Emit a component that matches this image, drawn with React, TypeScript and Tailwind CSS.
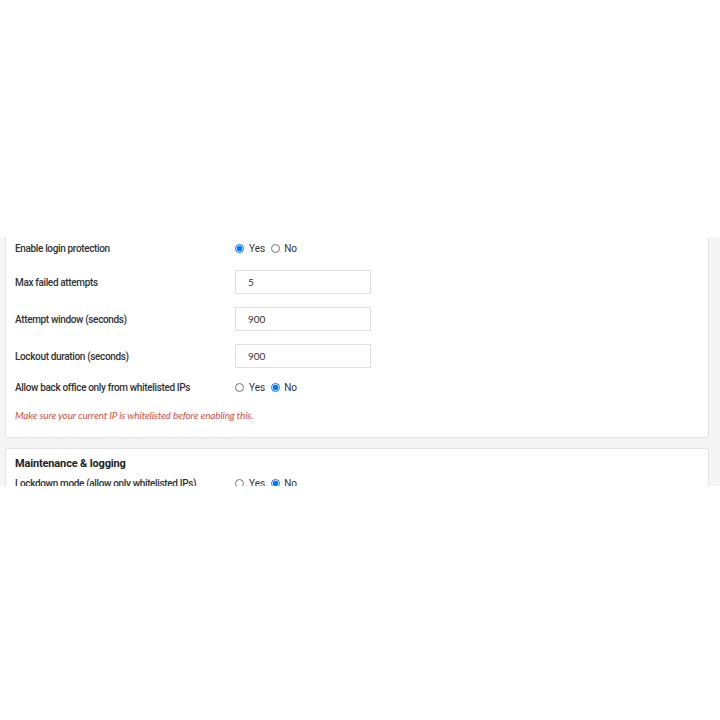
import React from "react";

type Row =
  | { id: number; kind: "radio"; label: string; value: "yes" | "no" }
  | { id: number; kind: "input"; label: string; value: string };

const loginRows: Row[] = [
  { id: 1, kind: "radio", label: "Enable login protection", value: "yes" },
  { id: 2, kind: "input", label: "Max failed attempts", value: "5" },
  { id: 3, kind: "input", label: "Attempt window (seconds)", value: "900" },
  { id: 4, kind: "input", label: "Lockout duration (seconds)", value: "900" },
  { id: 5, kind: "radio", label: "Allow back office only from whitelisted IPs", value: "no" },
];

const labelFont = { fontFamily: "Roboto, 'Noto Sans', sans-serif" };
const bodyFont = { fontFamily: "Lato, 'Open Sans', sans-serif" };

const YesNo = ({ name, value }: { name: string; value: "yes" | "no" }) => (
  <div className="flex items-center text-[10px] text-[#333]" style={labelFont}>
    <input
      type="radio"
      name={name}
      defaultChecked={value === "yes"}
      className="m-0 h-[9px] w-[9px]"
    />
    <span className="ml-[5px]">Yes</span>
    <input
      type="radio"
      name={name}
      defaultChecked={value === "no"}
      className="m-0 ml-[6px] h-[9px] w-[9px]"
    />
    <span className="ml-[4px]">No</span>
  </div>
);

const Label = ({ children }: { children: React.ReactNode }) => (
  <div
    className="w-[220px] shrink-0 text-[10px] font-medium tracking-[-0.35px] text-[#333]"
    style={labelFont}
  >
    {children}
  </div>
);

export default function App() {
  return (
    <div className="min-h-screen w-full bg-white">
      <div className="h-[237px]" />
      <div className="h-[249px] overflow-hidden bg-[#f5f5f5] pl-[5px] pr-[11px]">
        {/* login protection card, top scrolled out of view */}
        <div className="rounded-b-[3px] border border-t-0 border-[#e3e3e3] bg-white px-[9px] pb-[15px] pt-[1px]">
          {loginRows.map((row, i) => {
            const spacing =
              i === 0 ? "" : row.kind === "input" ? (i === 1 ? "mt-[12px]" : "mt-[13px]") : "mt-[9px]";
            return (
              <div
                key={row.id}
                className={`flex items-center ${row.kind === "radio" ? "h-[20px]" : "h-[24px]"} ${spacing}`}
              >
                <Label>{row.label}</Label>
                {row.kind === "radio" ? (
                  <YesNo name={`r${row.id}`} value={row.value} />
                ) : (
                  <input
                    readOnly
                    value={row.value}
                    className="h-[24px] w-[136px] border border-[#e0e0e0] bg-white px-[12px] text-[10px] text-[#333] outline-none"
                    style={bodyFont}
                  />
                )}
              </div>
            );
          })}
          <p
            className="mt-[11px] h-[14px] text-[10px] italic leading-[14px] tracking-[-0.15px] text-[#cf5448]"
            style={bodyFont}
          >
            Make sure your current IP is whitelisted before enabling this.
          </p>
        </div>

        <div className="mt-[10px] rounded-[3px] border border-[#e3e3e3] bg-white px-[9px] pt-[7px]">
          <h3
            className="h-[16px] text-[11px] font-bold leading-[16px] tracking-[-0.15px] text-[#222]"
            style={labelFont}
          >
            Maintenance &amp; logging
          </h3>
          <div className="mt-[1px] flex h-[20px] items-center">
            <Label>Lockdown mode (allow only whitelisted IPs)</Label>
            <YesNo name="lockdown" value="no" />
          </div>
          <div className="mt-[9px] flex h-[20px] items-center">
            <Label>Log failed login attempts</Label>
            <YesNo name="logfail" value="yes" />
          </div>
        </div>
      </div>
    </div>
  );
}
